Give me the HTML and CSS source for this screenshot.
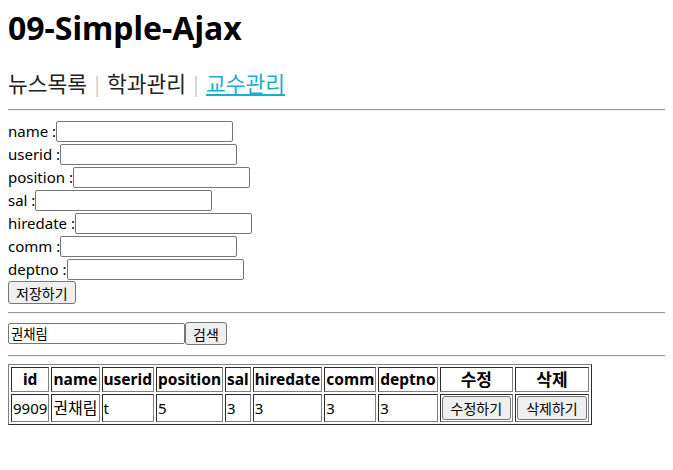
FILE: index.html
```html
<!DOCTYPE html>
<html lang="ko">
<head>
<meta charset="utf-8">
<title>09-Simple-Ajax</title>
<link rel="stylesheet" href="styles.css">
</head>
<body>
<h1 class="title">09-Simple-Ajax</h1>
<nav class="menu">
  <a class="menu-item" href="#">뉴스목록</a>
  <span class="sep">|</span>
  <a class="menu-item" href="#">학과관리</a>
  <span class="sep">|</span>
  <a class="menu-item active" href="#">교수관리</a>
</nav>
<hr class="rule">
<form class="prof-form">
  <div class="field"><label class="field-label">name :</label><input class="text-input" type="text"></div>
  <div class="field"><label class="field-label">userid :</label><input class="text-input" type="text"></div>
  <div class="field"><label class="field-label">position :</label><input class="text-input" type="text"></div>
  <div class="field"><label class="field-label">sal :</label><input class="text-input" type="text"></div>
  <div class="field"><label class="field-label">hiredate :</label><input class="text-input" type="text"></div>
  <div class="field"><label class="field-label">comm :</label><input class="text-input" type="text"></div>
  <div class="field"><label class="field-label">deptno :</label><input class="text-input" type="text"></div>
  <div class="field"><button type="button" class="btn">저장하기</button></div>
</form>
<hr class="rule">
<div class="search">
  <input class="text-input" type="text" value="권채림"><button type="button" class="btn">검색</button>
</div>
<hr class="rule">
<table class="prof-table">
  <thead>
    <tr>
      <th>id</th><th>name</th><th>userid</th><th>position</th><th>sal</th><th>hiredate</th><th>comm</th><th>deptno</th><th class="th-ko">수정</th><th class="th-ko">삭제</th>
    </tr>
  </thead>
  <tbody>
    <tr>
      <td>9909</td><td class="td-ko">권채림</td><td>t</td><td>5</td><td>3</td><td>3</td><td>3</td><td>3</td>
      <td class="cell-action"><button type="button" class="btn btn-table">수정하기</button></td>
      <td class="cell-action"><button type="button" class="btn btn-table">삭제하기</button></td>
    </tr>
  </tbody>
</table>
</body>
</html>
```
FILE: styles.css
```css
body {
  margin: 8px;
  font-family: "Noto Sans", "Noto Sans CJK KR", sans-serif;
  font-size: 15px;
  color: #000;
  background: #fff;
}

.title {
  margin: 0 0 22px;
  font-size: 32px;
  line-height: 40px;
  font-weight: 700;
}

.menu {
  display: flex;
  align-items: baseline;
  font-size: 21.5px;
  line-height: 28px;
  margin-bottom: 11px;
}

.menu-item {
  color: #222;
  text-decoration: none;
}

.menu-item.active {
  color: #17b0cc;
  text-decoration: underline;
}

.sep {
  color: #ccc;
  margin: 0 4px;
}

.rule {
  box-sizing: border-box;
  width: calc(100% + 7px);
  margin: 0;
  height: 2px;
  border: 0;
  border-top: 1px solid #9a9a9a;
  border-bottom: 1px solid #eeeeee;
}

.prof-form {
  margin: 9px 0 8px;
}

.field {
  display: flex;
  align-items: center;
  height: 23px;
  line-height: 23px;
}

.text-input {
  box-sizing: border-box;
  width: 177px;
  height: 21px;
  margin: 0;
  padding: 1px 2px;
  border: 1px solid #767676;
  border-radius: 2px;
  font-family: "Noto Sans", "Noto Sans CJK KR", sans-serif;
  font-size: 13.33px;
  color: #000;
  background: #fff;
}

.btn {
  box-sizing: border-box;
  height: 23px;
  margin: 0;
  padding: 0 7px;
  border: 1px solid #767676;
  border-radius: 3px;
  background: #efefef;
  font-family: "Noto Sans", "Noto Sans CJK KR", sans-serif;
  font-size: 14px;
  color: #000;
}

.search {
  display: flex;
  align-items: center;
  height: 23px;
  margin: 8px 0 10px;
}

.prof-table {
  margin-top: 7px;
  border: 1px outset gray;
  border-collapse: separate;
  border-spacing: 2px;
  font-size: 15px;
  line-height: 21px;
}

.prof-table th,
.prof-table td {
  border: 1px inset gray;
  padding: 1px;
}

.prof-table th {
  font-size: 15.5px;
  font-weight: 700;
  text-align: center;
}

.prof-table .th-ko {
  font-size: 17px;
}

.prof-table td {
  text-align: left;
}

.prof-table .td-ko {
  font-size: 16px;
}

.prof-table .cell-action {
  text-align: center;
}

.btn-table {
  height: 24px;
  padding: 0 8px;
  vertical-align: middle;
}
```
